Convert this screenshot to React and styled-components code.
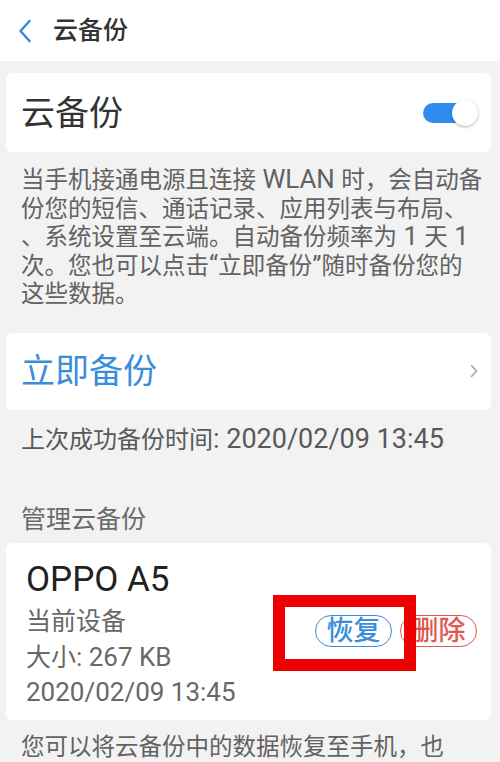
import React from "react";
import styled, { createGlobalStyle } from "styled-components";

const Global = createGlobalStyle`
  html, body { margin: 0; padding: 0; background: #f2f2f2; }
  body { font-family: Roboto, "Noto Sans CJK SC", sans-serif; overflow: hidden; }
  * { box-sizing: border-box; }
`;

const Page = styled.div`
  width: 500px;
  height: 762px;
  overflow: hidden;
  background: #f2f2f2;
`;

const Header = styled.header`
  height: 61px;
  background: #ffffff;
  display: flex;
  align-items: center;
  padding-left: 18px;
  gap: 21px;
`;

const HeaderTitle = styled.h1`
  margin: 0;
  font-size: 25px;
  font-weight: 500;
  color: #333;
  line-height: 1;
`;

const Body = styled.main`
  padding: 12px 9px 0 6px;
  display: flex;
  flex-direction: column;
`;

const Card = styled.section`
  position: relative;
  background: #fff;
  border-radius: 6px;
  display: flex;
  align-items: center;
  justify-content: space-between;
  height: ${(p) => p.$h}px;
  padding: ${(p) => p.$pad};
`;

const CardTitle = styled.span`
  font-size: 34px;
  color: ${(p) => (p.$blue ? "#3a8ddb" : "#333")};
  line-height: 1;
`;

const Latin = styled.span`
  font-size: ${(p) => p.$scale || 1.1}em;
  line-height: 0;
`;

const Toggle = styled.div`
  position: relative;
  width: 55px;
  height: 26px;
  display: flex;
  align-items: center;
`;

const Track = styled.div`
  width: 48px;
  height: 20px;
  border-radius: 10px;
  background: #2f8cf0;
`;

const Knob = styled.div`
  position: absolute;
  right: 0;
  top: 0;
  width: 26px;
  height: 26px;
  border-radius: 50%;
  background: #fff;
  box-shadow: 0 1px 3px rgba(0, 0, 0, 0.3);
`;

const Note = styled.p`
  margin: 0;
  padding: ${(p) => p.$pad};
  font-size: ${(p) => p.$size || 23.5}px;
  line-height: ${(p) => p.$lh || 28.5}px;
  color: ${(p) => p.$color || "#626262"};
  white-space: nowrap;
`;

const DeviceInfo = styled.div`
  display: flex;
  flex-direction: column;
  margin-top: 6px;
`;

const DeviceName = styled.div`
  font-size: 35px;
  line-height: 44px;
  color: #222;
  margin-bottom: 2.5px;
`;

const DeviceLine = styled.div`
  font-size: 25px;
  line-height: 35.5px;
  color: #686868;
`;

const Actions = styled.div`
  display: flex;
  gap: 8px;
`;

const Pill = styled.button`
  height: 32px;
  width: 77px;
  border-radius: 16px;
  border: 1.5px solid ${(p) => p.$color};
  background: #fff;
  color: ${(p) => p.$color};
  font-family: inherit;
  font-size: 27px;
  font-weight: 500;
  line-height: 1;
  padding: 0;
  display: flex;
  align-items: center;
  justify-content: center;
`;

const Highlight = styled.div`
  position: absolute;
  left: 267px;
  top: 52px;
  width: 143px;
  height: 76px;
  border: 12.5px solid #ee0000;
  pointer-events: none;
`;

function BackIcon() {
  return (
    <svg width="14" height="24" viewBox="0 0 14 24">
      <path d="M11.5 2 L2.5 12 L11.5 22" fill="none" stroke="#3a8ddb" strokeWidth="2.6" strokeLinecap="round" strokeLinejoin="round" />
    </svg>
  );
}

function ChevronIcon() {
  return (
    <svg width="8" height="14" viewBox="0 0 8 14">
      <path d="M1.5 1.5 L6.5 7 L1.5 12.5" fill="none" stroke="#a8a8a8" strokeWidth="1.6" strokeLinecap="round" strokeLinejoin="round" />
    </svg>
  );
}

export default function App() {
  return (
    <Page>
      <Global />
      <Header>
        <BackIcon />
        <HeaderTitle>云备份</HeaderTitle>
      </Header>
      <Body>
        <Card $h={79} $pad="0 13px 0 15px">
          <CardTitle>云备份</CardTitle>
          <Toggle>
            <Track />
            <Knob />
          </Toggle>
        </Card>
        <Note $pad="14px 15px 24px 15px">
          当手机接通电源且连接<Latin> WLAN </Latin>时，会自动备<br />
          份您的短信、通话记录、应用列表与布局、<br />
          、系统设置至云端。自动备份频率为<Latin> 1 </Latin>天<Latin> 1</Latin><br />
          次。您也可以点击<Latin>“</Latin>立即备份<Latin>”</Latin>随时备份您的<br />
          这些数据。
        </Note>
        <Card $h={77} $pad="0 13px 0 15px">
          <CardTitle $blue>立即备份</CardTitle>
          <ChevronIcon />
        </Card>
        <Note $pad="15px 15px 0 15px" $size={24} $lh={30} $color="#595959">
          上次成功备份时间<Latin $scale={1.125}>: 2020/02/09 13:45</Latin>
        </Note>
        <Note $pad="50px 15px 8px 15px" $size={25} $lh={30} $color="#6a6a6a">
          管理云备份
        </Note>
        <Card $h={177} $pad="0 14px 0 20px">
          <DeviceInfo>
            <DeviceName>OPPO A5</DeviceName>
            <DeviceLine>当前设备</DeviceLine>
            <DeviceLine>大小<Latin $scale={1.04}>: 267 KB</Latin></DeviceLine>
            <DeviceLine><Latin $scale={1.04}>2020/02/09 13:45</Latin></DeviceLine>
          </DeviceInfo>
          <Actions>
            <Pill $color="#3a8ddb">恢复</Pill>
            <Pill $color="#dd5a50">删除</Pill>
          </Actions>
          <Highlight />
        </Card>
        <Note $pad="13px 15px 0 15px">
          您可以将云备份中的数据恢复至手机，也
        </Note>
      </Body>
    </Page>
  );
}
